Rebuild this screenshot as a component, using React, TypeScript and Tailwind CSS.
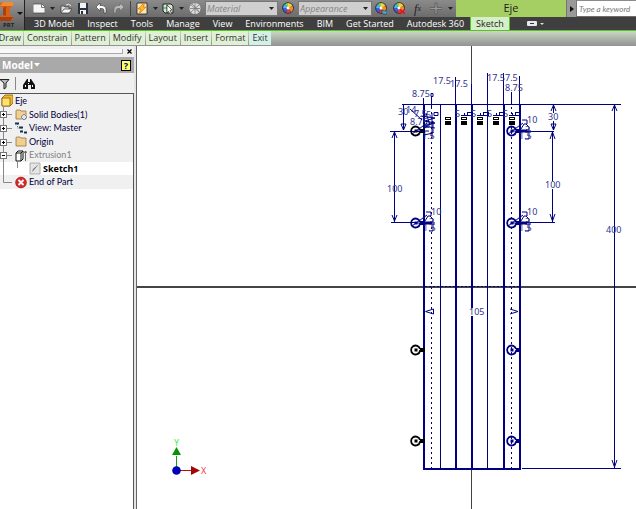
import React, { useState } from 'react';

const NAVY = '#000080';

type IconProps = { children: React.ReactNode; w?: number };

const Icon = ({ children, w = 12 }: IconProps) => (
  <svg width={w} height="13" viewBox={`0 0 ${w} 13`} className="shrink-0" aria-hidden="true">
    {children}
  </svg>
);

const Caret = () => (
  <svg width="5" height="3" viewBox="0 0 5 3" className="shrink-0" aria-hidden="true">
    <path d="M0 0h5L2.5 3z" fill="#222" />
  </svg>
);

const Wheel = () => (
  <>
    <circle cx="6" cy="6" r="5.800" fill="#223" />
    <path d="M6 6V1a5 5 0 0 1 4.500 3z" fill="#f4d430" />
    <path d="M6 6l4.500-2a5 5 0 0 1-1.200 6z" fill="#f08a2a" />
    <path d="M6 6l3.300 4A5 5 0 0 1 4 10.500z" fill="#d63b46" />
    <path d="M6 6l-2 4.500A5 5 0 0 1 1 6z" fill="#4458d8" />
    <path d="M6 6H1a5 5 0 0 1 2-4z" fill="#49b5e8" />
    <path d="M6 6L3 2a5 5 0 0 1 3-1z" fill="#79d858" />
    <circle cx="6" cy="6" r="1.500" fill="#fff" />
  </>
);

const quickButton = 'flex h-full items-center justify-center shrink-0';

const QuickAccess = () => {
  const [material, setMaterial] = useState('Material');
  const [look, setLook] = useState('Appearance');

  return (
    <div className="flex h-[17px] items-center bg-linear-to-b from-[#8b8b8b] to-[#6c6c6c]">
      <button aria-label="New" className={`${quickButton} w-[21px] pl-[6px]`}>
        <Icon><path d="M0 2h9l3 3v6H0z" fill="#f5f5f5" stroke="#444" strokeWidth=".7" /><path d="M8.500 2v3.500H12" fill="none" stroke="#777" /></Icon>
      </button>
      <button aria-label="New options" className={`${quickButton} w-[12px]`}><Caret /></button>
      <button aria-label="Open" className={`${quickButton} w-[15px]`}>
        <Icon><path d="M1 11V4h3l1 1h4v2" fill="#ddd" stroke="#333" strokeWidth=".7" /><path d="M1 11l3-4h8l-3 4z" fill="#f5f5f5" stroke="#333" strokeWidth=".7" /><path d="M6 3q3-2 5 1" fill="none" stroke="#eee" /></Icon>
      </button>
      <button aria-label="Save" className={`${quickButton} w-[19px]`}>
        <Icon><path d="M1 1h10v11H1z" fill="#26313e" /><path d="M3 1h6v5H3zM3 8h6v4H3z" fill="#f2f2f2" /><path d="M4 9h2v3H4z" fill="#26313e" /></Icon>
      </button>
      <button aria-label="Undo" className={`${quickButton} w-[17px]`}>
        <Icon><path d="M1 5l4-4v2.500h2q4 0 4 4V11H9V8.500Q9 6.500 7 6.500H5V9z" fill="#fff" stroke="#333" strokeWidth=".6" /></Icon>
      </button>
      <button aria-label="Redo" className={`${quickButton} w-[19px]`}>
        <Icon><path d="M11 5L7 1v2.500H5q-4 0-4 4V11h2V8.500q0-2 2-2h2V9z" fill="#bbb" stroke="#666" strokeWidth=".6" /></Icon>
      </button>
      <span className="ml-[2px] h-[15px] w-px bg-[#444]" />
      <button aria-label="Update" className={`${quickButton} ml-[2px] w-[18px]`}>
        <Icon><path d="M1 1h10v11H1z" fill="#f7e6bc" stroke="#222" strokeWidth=".8" /><path d="M8 1L2 7h3l-2 5 7-7H7l2-4z" fill="#ffbd1a" stroke="#e46f13" strokeWidth=".7" /></Icon>
      </button>
      <button aria-label="Update options" className={`${quickButton} w-[8px]`}><Caret /></button>
      <button aria-label="Select" className={`${quickButton} w-[18px]`}>
        <Icon><path d="M1 2h8l2 2v7H3L1 9z" fill="#d9e6d9" stroke="#222" /><path d="M5 2v9M1 6h5" stroke="#28944b" /><path d="M5 3l5 5-2 .4 1.500 3-1.500.8-1.500-3L5 11z" fill="#fff" stroke="#111" strokeWidth=".6" /></Icon>
      </button>
      <button aria-label="Select options" className={`${quickButton} w-[8px]`}><Caret /></button>
      <button aria-label="Material browser" className={`${quickButton} w-[20px]`}>
        <Icon><circle cx="6" cy="6.500" r="5.500" fill="#ddd" /><path d="M2 3l8 7M10 3l-8 7M6 1v11M1 6.500h10M3 2q5 4 7 8" stroke="#777" strokeWidth=".8" fill="none" /></Icon>
      </button>
      <div className="relative h-[15px] w-[73px] shrink-0 border border-[#777] bg-[#cfcfcf]">
        <select aria-label="Material" value={material} onChange={(e) => setMaterial(e.target.value)} className="block h-full w-full appearance-none pl-px font-['Open_Sans',sans-serif] text-[9px] leading-[13px] text-[#858585] italic">
          <option>Material</option>
        </select>
        <span className="pointer-events-none absolute top-[5px] right-[3px] flex"><Caret /></span>
      </div>
      <button aria-label="Appearance browser" className={`${quickButton} w-[20px]`}><Icon><Wheel /></Icon></button>
      <div className="relative h-[15px] w-[74px] shrink-0 border border-[#777] bg-[#cfcfcf]">
        <select aria-label="Appearance" value={look} onChange={(e) => setLook(e.target.value)} className="block h-full w-full appearance-none pl-px font-['Open_Sans',sans-serif] text-[9px] leading-[13px] text-[#858585] italic">
          <option>Appearance</option>
        </select>
        <span className="pointer-events-none absolute top-[5px] right-[3px] flex"><Caret /></span>
      </div>
      <button aria-label="Adjust" className={`${quickButton} w-[18px]`}>
        <Icon><Wheel /><path d="M6 9h6v3H8z" fill="#39b5e8" stroke="#222" strokeWidth=".5" /></Icon>
      </button>
      <button aria-label="Clear" className={`${quickButton} w-[18px]`}>
        <Icon><Wheel /><path d="M7 7l5 5M12 7l-5 5" stroke="#e01818" strokeWidth="1.500" /></Icon>
      </button>
      <button aria-label="Parameters" className={`${quickButton} w-[19px] font-['Liberation_Serif',serif] text-[12px] leading-3 text-[#222] italic`}>
        f<span className="text-[8px]">x</span>
      </button>
      <button aria-label="Add" className={`${quickButton} w-[18px]`}>
        <Icon><path d="M5 1h2v4.500h5v2H7V12H5V7.500H0v-2h5z" fill="#999" stroke="#555" strokeWidth=".7" /></Icon>
      </button>
      <button aria-label="Customize" className={`${quickButton} w-[11px]`}><Caret /></button>
      <div className="h-full min-w-0 flex-1 bg-[#a6cf63] pt-px text-center font-['Open_Sans',sans-serif] text-[11px] leading-[14px] text-[#222]">Eje</div>
      <button aria-label="Show search" className={`${quickButton} w-[11px] border-x border-[#777] bg-[#999]`}>
        <svg width="4" height="6" viewBox="0 0 4 6"><path d="M0 0l4 3-4 3z" fill="#111" /></svg>
      </button>
      <input aria-label="Search" placeholder="Type a keyword" className="h-[15px] w-[59px] shrink-0 bg-white pl-[2px] font-['Lato',sans-serif] text-[8px] italic placeholder:text-[#777]" />
    </div>
  );
};

const tabs = ['3D Model', 'Inspect', 'Tools', 'Manage', 'View', 'Environments', 'BIM', 'Get Started', 'Autodesk 360'];
const panels = ['Constrain', 'Pattern', 'Modify', 'Layout', 'Insert', 'Format'];

const Ribbon = () => (
  <header className="font-['Open_Sans',sans-serif]">
    <div className="flex border-b border-[#55c41c] bg-[#3f3f3f]">
      <button aria-label="Application menu" className="flex h-[30px] w-[25px] shrink-0 flex-col border-r border-[#222] bg-linear-to-b from-[#999] to-[#5c5c5c]">
        <svg width="24" height="29" viewBox="0 0 24 29">
          <path d="M0 3l3-1h10v4L10 8v7l3 2v3l-2 1H0v-4l3-2V8L0 6z" fill="#d96018" />
          <path d="M3 2h10v4H0z" fill="#f08a35" />
          <path d="M3 8l3-2v10l-3-1zM0 17h13l-2 4H0z" fill="#a9400e" />
          <path d="M17 12h6l-3 3z" fill="#111" />
          <text x="3" y="27" fontSize="6" fontWeight="bold" fill="#222" fontFamily="Open Sans, sans-serif">PRT</text>
        </svg>
      </button>
      <div className="min-w-0 flex-1">
        <QuickAccess />
        <nav className="flex h-[13px] pl-[2px] text-[9px] leading-[13px] text-white">
          {tabs.map((tab) => (
            <button key={tab} className="shrink-0 pr-[6px] pl-[7px] whitespace-nowrap">{tab}</button>
          ))}
          <button className="shrink-0 border-x border-[#55c41c] bg-[#d5efc8] px-[5px] text-[#222]">Sketch</button>
          <button aria-label="Ribbon display" className="ml-[17px] flex shrink-0 items-center">
            <svg width="18" height="6" viewBox="0 0 18 6"><rect width="10" height="5" rx="1" fill="#e5e8f0" /><path d="M3 2h4v1H3z" fill="#333" /><path d="M13 2h4l-2 2z" fill="#ddd" /></svg>
          </button>
        </nav>
      </div>
    </div>
    <div className="flex h-[15px] gap-px bg-linear-to-b from-[#c9d8c4] to-[#929292] text-[9px] leading-[14px] text-[#333]">
      <button className="flex h-[14px] w-[23px] shrink-0 justify-end overflow-hidden bg-[#dff0d5] pr-[2px]">Draw</button>
      {panels.map((panel) => (
        <button key={panel} className="h-[14px] shrink-0 bg-[#dff0d5] px-[3px]">{panel}</button>
      ))}
      <button className="h-[14px] shrink-0 bg-[#d3f0e6] px-[3px]">Exit</button>
    </div>
  </header>
);

const Expander = ({ open, last }: { open?: boolean; last?: boolean }) => (
  <svg width="13" height="14" viewBox="0 0 13 14" className="shrink-0" aria-hidden="true">
    <path d={last ? 'M3.500 0v7.500H12' : 'M3.500 0v14M4 7.500h8'} fill="none" stroke="#888" />
    {!last && <rect x=".5" y="4.500" width="6" height="6" fill="#fff" stroke="#777" />}
    {!last && <path d={open ? 'M2 7.500h3' : 'M2 7.500h3M3.500 6v3'} stroke="#000" />}
  </svg>
);

const folder = <path d="M1 3q0-1 1-1h3l1 1h5v8H1z" fill="#f1cf91" stroke="#98713c" strokeWidth=".8" />;

const ModelTree = () => (
  <ul className="grid h-[95px] grid-rows-7 font-['Lato',sans-serif] text-[9px] whitespace-nowrap text-[#00003c]">
    <li className="flex items-center gap-[2px] bg-[#f0f0f0] pl-px">
      <Icon><path d="M1 4l3-3h8v8l-3 3H1z" fill="#f0b92d" stroke="#8b5a00" strokeWidth=".8" /><path d="M1 4h8v8H1z" fill="#ffe272" stroke="#8b5a00" strokeWidth=".8" /></Icon>
      Eje
    </li>
    <li className="flex items-center gap-[2px] bg-[#f0f0f0]">
      <Expander />
      <Icon>{folder}<path d="M6 9l3-3 3 3-3 3z" fill="#dce5ef" stroke="#687890" strokeWidth=".8" /></Icon>
      Solid Bodies(1)
    </li>
    <li className="flex items-center gap-[2px] bg-[#f0f0f0]">
      <Expander />
      <Icon><path d="M0 2.500h4M4 6.500h4M5 10.500h3M9 11.500h3" stroke="#163250" strokeWidth="2" /><path d="M2.500 3v4H5M6.500 7v4" fill="none" stroke="#5d7488" strokeDasharray="1 1" /></Icon>
      View: Master
    </li>
    <li className="flex items-center gap-[2px] bg-[#f0f0f0]">
      <Expander />
      <Icon>{folder}</Icon>
      Origin
    </li>
    <li className="flex items-center gap-[2px] bg-[#f0f0f0] text-[#858585]">
      <Expander open />
      <Icon><path d="M1 4l2-2h5v8l-2 2H1zM1 4h5v8M6 4l2-2" fill="#fff" stroke="#111" /><path d="M10.500 12V2M9 4l1.500-2L12 4" fill="none" stroke="#444" strokeWidth=".8" /></Icon>
      Extrusion1
    </li>
    <li className="flex items-center gap-[2px] bg-white font-['Noto_Sans',sans-serif] font-bold text-black">
      <svg width="27" height="14" viewBox="0 0 27 14" className="shrink-0"><path d="M17.500 0v6" stroke="#888" /><path d="M3.500 0v14" stroke="#888" /></svg>
      <Icon><path d="M1 1h10v11H1z" fill="#e5e5e5" stroke="#aaa" /><path d="M3 10l1-3 6-5-5 6z" fill="#777" /></Icon>
      Sketch1
    </li>
    <li className="flex items-center gap-[2px] bg-[#f0f0f0]">
      <Expander last />
      <Icon><circle cx="6" cy="6.500" r="5.400" fill="#d92727" stroke="#8b1010" strokeWidth=".6" /><path d="M3.500 4l5 5M8.500 4l-5 5" stroke="#fff" strokeWidth="1.800" /></Icon>
      End of Part
    </li>
  </ul>
);

const ModelBrowser = () => (
  <aside className="flex w-[134px] shrink-0 flex-col bg-[#f0f0f0] font-['Noto_Sans',sans-serif]">
    <div className="flex h-[11px] items-center justify-between pr-[2px]">
      <span className="h-[5px] w-[123px] border-r border-b border-[#aaa] bg-[#f8f8f8]" />
      <button aria-label="Close">
        <svg width="5" height="5" viewBox="0 0 5 5"><path d="M.5.5l4 4M4.500.5l-4 4" stroke="#000" strokeWidth="1.200" /></svg>
      </button>
    </div>
    <div className="flex h-[16px] items-center justify-between bg-[#a9a9a9] pr-[3px] pl-[2px]">
      <button className="flex items-center gap-px text-[10px] leading-[16px] font-bold text-white">
        Model
        <svg width="6" height="4" viewBox="0 0 6 4"><path d="M0 0h6L3 3.500z" fill="#fff" /></svg>
      </button>
      <button aria-label="Help" className="h-[11px] w-[10px] border border-black bg-[#ffff66] text-[9px] leading-[9px] font-bold text-[#000080]">?</button>
    </div>
    <div className="flex h-[20px] items-center">
      <button aria-label="Filter">
        <Icon><path d="M0 2.500h9L6 6v4.500L4 12V6z" fill="#bbb" stroke="#222" /></Icon>
      </button>
      <span className="mr-[7px] ml-[3px] h-[13px] w-px bg-[#888]" />
      <button aria-label="Find">
        <Icon><path d="M2 5l2-3h1v3h2V2h1l4 6v4H8V8H5v4H0V8z" fill="#111" /><path d="M2 8h1v2H2zM9 8h1v2H9zM5 6h1v1H5z" fill="#fff" /></Icon>
      </button>
    </div>
    <div className="flex-1 border-t border-r border-[#555] bg-white">
      <ModelTree />
    </div>
  </aside>
);

type KeyholeProps = { x: number; y: number; color?: string; dimmed?: boolean };

const Keyhole = ({ x, y, color = NAVY, dimmed }: KeyholeProps) => (
  <g stroke={color} fill="none" strokeWidth="1.800">
    <path d={`M${x + 4} ${y - 1}a4.500 4.500 0 1 0 0 2h5M${x + 4} ${y - 1}h5`} />
    <rect x={x - 1.5} y={y - 1.5} width="3" height="3" fill={color} stroke="none" />
    {dimmed && <path d={`M${x - 4} ${y + 3}l15 -11M${x} ${y}h13`} stroke={NAVY} strokeWidth="1" />}
  </g>
);

// crowded radius and gap dimensions beside a slot
const SlotDims = ({ x, y }: { x: number; y: number }) => (
  <g>
    <path d={`M${x + 10} ${y - 11}h5v4h-3l-3 5M${x + 5} ${y}h14M${x + 14} ${y - 7}l3 3v3h-3M${x + 17} ${y + 1}v7h-4`} fill="none" stroke={NAVY} />
    <path d={`M${x + 5} ${y}h10`} stroke={NAVY} strokeWidth="3" />
    <text x={x + 15} y={y - 8}>10</text>
    <text x={x + 7} y={y + 8}>1.5</text>
    <text x={x + 13} y={y + 2}>3</text>
  </g>
);

const dims = [
  { x: 433, y: 84, label: '17.5' },
  { x: 450, y: 87, label: '17.5' },
  { x: 487, y: 81, label: '17.5' },
  { x: 505, y: 81, label: '7.5' },
  { x: 412, y: 97, label: '8.75' },
  { x: 505, y: 91, label: '8.75' },
  { x: 398, y: 115, label: '30' },
  { x: 548, y: 120, label: '30' },
  { x: 387, y: 192, label: '100' },
  { x: 545, y: 188, label: '100' },
  { x: 606, y: 233, label: '400' },
  { x: 469, y: 315, label: '105' },
];

const slotMarks = [448, 464, 480, 496, 512];

const SketchCanvas = () => (
  <main className="min-w-0 flex-1 overflow-hidden border-l border-[#666] bg-white">
    <svg viewBox="137 46 499 463" preserveAspectRatio="xMidYMid slice" className="h-full w-full" role="img" aria-label="Sketch1">
      <path d="M471.500 46v463" stroke="#444" />
      <path d="M137 287h499" stroke="#444" strokeWidth="2" />

      <g stroke={NAVY} fill="none" shapeRendering="crispEdges">
        <path d="M424 104v365h96V104M456 104v365M472 104v365M504 104v365" strokeWidth="2" />
        <path d="M402 104.500h219M440.500 104v365M487.500 104v365" />
        <path d="M431.500 97v372M511.500 92v377" strokeDasharray="2 3" />
        <path d="M425 286.500h95" strokeDasharray="2 2" />
        <path d="M455.500 77v27M471.500 84v20M487.500 73v31M503.500 73v31M519.500 76v28M423.500 98v6M431.500 98v10M511.500 92v12" />
        <path d="M614.500 104v364M522 468.500h99" />
        <path d="M403.500 104v26M390 131.500h30M394.500 131v91M391 222.500h25" />
        <path d="M553.500 104v26M525 131.500h29M552.500 131v91M525 222.500h30" />
      </g>
      <g stroke={NAVY} fill="none">
        <path d="M612 460l2.500 7 2.500-7M612 111l2.500-6 2.500 6" />
        <path d="M401 124l2.500 6 2.500-6zM392 138l2.500-6 2.500 6M392 215l2.500 6 2.500-6" />
        <path d="M551 124l2.500 6 2.500-6zM551 111l2.500-6 2.500 6M550 139l2.500-7 2.500 7M550 214l2.500 7 2.500-7" />
        <path d="M433.500 309v5l-8-2.500zM510 309l8 2.500-8 2.500M431 93.500h2v3h-2z" />
      </g>

      {/* white plates keep the values readable over their lines */}
      <g fill="#fff">
        <rect x="549" y="113" width="10" height="8" />
        <rect x="544" y="181" width="16" height="8" />
        <rect x="470" y="308" width="15" height="8" />
      </g>
      <g fill="#33338f" className="font-['Noto_Sans',sans-serif] text-[9px]">
        {dims.map((d) => (
          <text key={`${d.x}-${d.y}`} x={d.x} y={d.y}>{d.label}</text>
        ))}
        <text x="406" y="113">14</text>
        <text x="414" y="117">7.5</text>
        <text x="410" y="125">8.75</text>
        {slotMarks.slice(1).map((x) => (
          <text key={x} x={x - 9} y="117">5</text>
        ))}
        <SlotDims x={512} y={131} />
        <SlotDims x={416} y={223} />
        <SlotDims x={512} y={223} />
        <text x="422" y="139">1.5</text>
        <text x="426" y="118">5</text>
        <text x="425" y="128">3</text>
      </g>

      {slotMarks.map((x) => (
        <g key={x} shapeRendering="crispEdges">
          <rect x={x - 2.5} y="117.500" width="5" height="2" fill="#fff" stroke="#000" />
          <rect x={x - 3} y="121" width="6" height="4" fill="#000" />
          {x !== 448 && <path d={`M${x - 3} 115.500h6M${x} 113v3M${x + 3} 112.500h5v3h-5z`} fill="none" stroke={NAVY} />}
        </g>
      ))}
      <path d="M421 116l14 2-10 3 10 2-11 3 11 2M426 113l4 12M432 113v25M410 109l12 11M424 129l9-8v12l-9 2M434 112.500h4v3h-4z" fill="none" stroke={NAVY} />

      <Keyhole x={416} y={131} color="#000" dimmed />
      <Keyhole x={512} y={131} dimmed />
      <Keyhole x={416} y={223} dimmed />
      <Keyhole x={512} y={223} dimmed />
      <Keyhole x={416} y={350} color="#000" />
      <Keyhole x={512} y={350} />
      <Keyhole x={416} y={441} color="#000" />
      <Keyhole x={512} y={441} />

      {/* origin triad */}
      <path d="M176.500 470V456" stroke="#12a012" />
      <path d="M176.500 447l4.500 8h-9z" fill="#079307" />
      <path d="M177 470.500h15" stroke="#b01010" />
      <path d="M191 466l9 4.500-9 4.500z" fill="#a00808" />
      <circle cx="176.500" cy="470.500" r="4.300" fill="#0000b8" />
      <g className="font-['Noto_Sans',sans-serif] text-[9px]">
        <text x="174" y="446" fill="#3cf03c">Y</text>
        <text x="201" y="474" fill="#f04040">X</text>
      </g>
    </svg>
  </main>
);

const App = () => {
  return (
    <div className="flex h-screen flex-col overflow-hidden bg-[#f0f0f0]">
      <Ribbon />
      <div className="flex min-h-0 flex-1">
        <ModelBrowser />
        <div className="w-[2px] shrink-0 bg-[#e4e4e4]" />
        <SketchCanvas />
      </div>
    </div>
  );
};

export default App;
